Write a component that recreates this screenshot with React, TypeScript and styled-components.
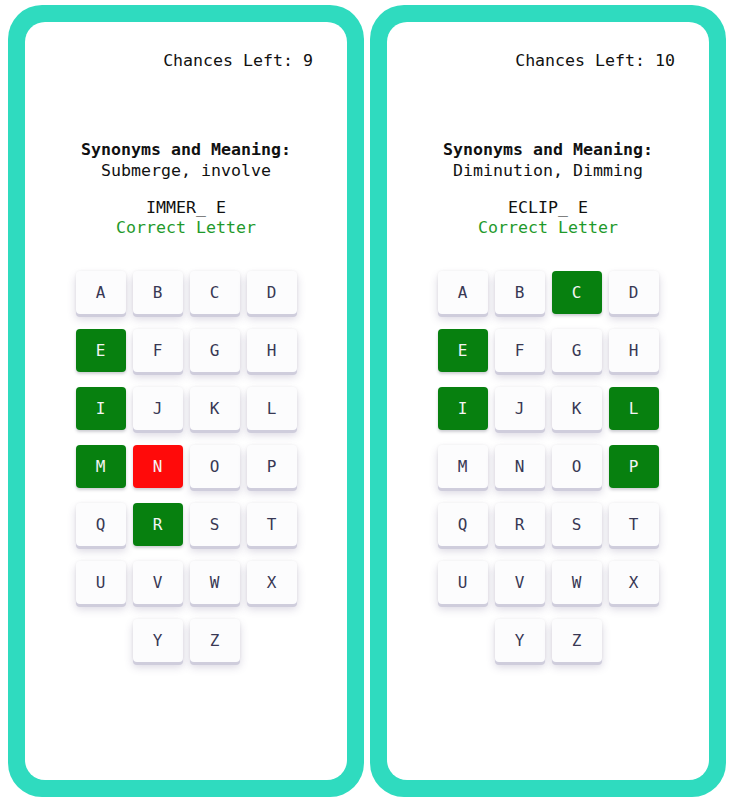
import React from "react";
import styled, { createGlobalStyle } from "styled-components";

const GlobalStyle = createGlobalStyle`
  html, body { margin: 0; padding: 0; background: #ffffff; }
  body { font-family: "DejaVu Sans Mono", "Liberation Mono", monospace; }
`;

const Page = styled.div`
  display: flex;
  gap: 6px;
  padding: 5px 10px 3px 8px;
  width: 736px;
  height: 800px;
  box-sizing: border-box;
`;

const Phone = styled.div`
  flex: 1;
  height: 792px;
  box-sizing: border-box;
  background: #2fdbbf;
  border-radius: 34px;
  padding: 17px;
  display: flex;
`;

const Screen = styled.div`
  flex: 1;
  background: #ffffff;
  border-radius: 20px;
  padding: 29px 34px 0;
  display: flex;
  flex-direction: column;
  align-items: center;
  font-family: "DejaVu Sans Mono", "Liberation Mono", monospace;
  font-size: 16.6px;
  color: #111111;
`;

const Chances = styled.div`
  align-self: flex-end;
  line-height: 20px;
`;

const Clue = styled.div`
  margin-top: 68px;
  text-align: center;
  line-height: 21px;
`;

const ClueTitle = styled.div`
  font-weight: bold;
`;

const Word = styled.div`
  margin-top: 17px;
  text-align: center;
  line-height: 20px;
`;

const Feedback = styled.div`
  color: #1f9a2b;
`;

const Keys = styled.div`
  margin-top: 33px;
  width: 221px;
  display: flex;
  flex-wrap: wrap;
  justify-content: center;
  column-gap: 7px;
  row-gap: 15px;
`;

type KeyState = "idle" | "correct" | "wrong";

const Key = styled.div<{ $state: KeyState }>`
  width: 50px;
  height: 43px;
  border-radius: 4px;
  display: flex;
  align-items: center;
  justify-content: center;
  font-size: 16px;
  background: ${(p) =>
    p.$state === "correct" ? "#07800f" : p.$state === "wrong" ? "#ff0a0a" : "#fcfcfd"};
  color: ${(p) => (p.$state === "idle" ? "#383854" : "#f4f4f4")};
  box-shadow: ${(p) =>
    p.$state === "idle"
      ? "0 3px 0 #cfcddc, 0 5px 9px rgba(80, 70, 120, 0.22), 0 0 3px rgba(0,0,0,0.06)"
      : "0 2px 3px rgba(60, 60, 80, 0.25)"};
`;

const LETTERS = "ABCDEFGHIJKLMNOPQRSTUVWXYZ".split("");

type Game = {
  chances: number;
  meaning: string;
  word: string;
  correct: string[];
  wrong: string[];
};

const games: Game[] = [
  { chances: 9, meaning: "Submerge, involve", word: "IMMER_ E", correct: ["E", "I", "M", "R"], wrong: ["N"] },
  { chances: 10, meaning: "Diminution, Dimming", word: "ECLIP_ E", correct: ["C", "E", "I", "L", "P"], wrong: [] },
];

function Board({ g }: { g: Game }) {
  return (
    <Phone>
      <Screen>
        <Chances>Chances Left: {g.chances}</Chances>
        <Clue>
          <ClueTitle>Synonyms and Meaning:</ClueTitle>
          <div>{g.meaning}</div>
        </Clue>
        <Word>
          <div>{g.word}</div>
          <Feedback>Correct Letter</Feedback>
        </Word>
        <Keys>
          {LETTERS.map((l) => (
            <Key
              key={l}
              $state={g.correct.includes(l) ? "correct" : g.wrong.includes(l) ? "wrong" : "idle"}
            >
              {l}
            </Key>
          ))}
        </Keys>
      </Screen>
    </Phone>
  );
}

export default function App() {
  return (
    <>
      <GlobalStyle />
      <Page>
        {games.map((g, i) => (
          <Board key={i} g={g} />
        ))}
      </Page>
    </>
  );
}
